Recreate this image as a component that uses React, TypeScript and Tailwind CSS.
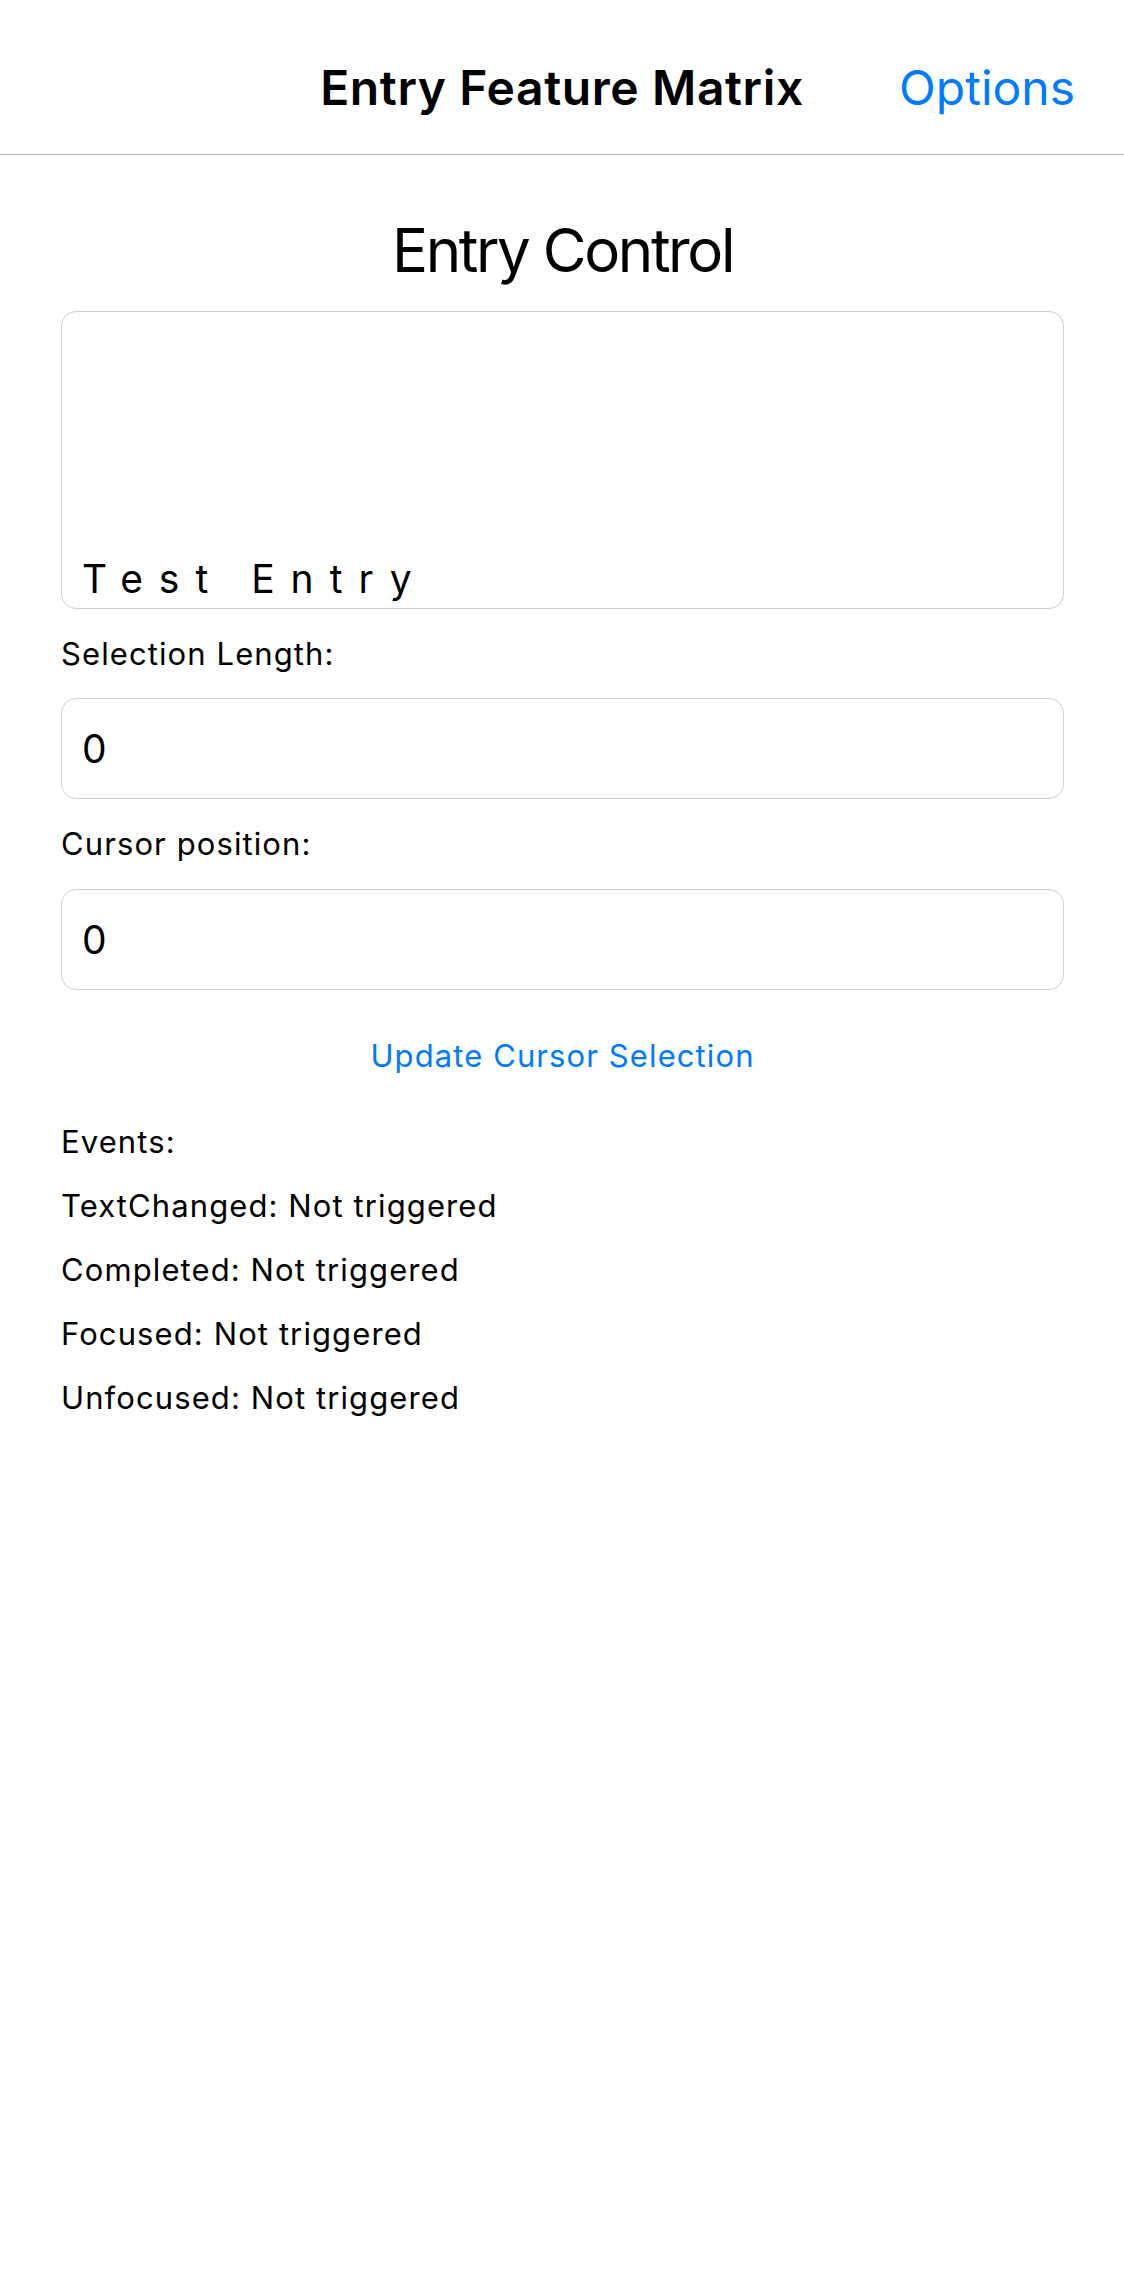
import React from 'react';

const EVENTS = ['TextChanged', 'Completed', 'Focused', 'Unfocused'];

const Field: React.FC<{ value: string; className?: string }> = ({ value, className }) => (
    <div className={`h-[101px] flex items-center pl-[20px] border border-[#cfcfcf] rounded-[15px] bg-white ${className ?? ''}`}>
        <span className="text-[39px] leading-[40px]">{value}</span>
    </div>
);

export default function App() {
    return (
        <div className="min-h-[2286px] bg-white text-black font-['Inter','Liberation_Sans',sans-serif]">
            {/* Navigation bar */}
            <div className="h-[155px] pt-[21px] grid grid-cols-[1fr_auto_1fr] items-center border-b border-[#b8b8b8]">
                <div />
                <h1 className="text-[48px] leading-[60px] font-semibold tracking-[0.6px]">Entry Feature Matrix</h1>
                <div className="flex justify-end pr-[49px]">
                    <button className="text-[48px] leading-[60px] text-[#007aff]">Options</button>
                </div>
            </div>

            <div className="ml-[61px] mr-[60px] flex flex-col">
                <h2 className="mt-[59px] text-[60px] leading-[72px] text-center tracking-[-2.4px]">Entry Control</h2>

                <div className="mt-[25px] h-[298px] flex items-end pl-[20px] pb-[9px] border border-[#cfcfcf] rounded-[15px]">
                    <span className="text-[39px] leading-[40px] tracking-[16px]">Test Entry</span>
                </div>

                <label className="mt-[25px] text-[31px] leading-[40px] tracking-[1.1px]">Selection Length:</label>
                <Field value="0" className="mt-[24px]" />

                <label className="mt-[25px] text-[31px] leading-[40px] tracking-[1.1px]">Cursor position:</label>
                <Field value="0" className="mt-[25px]" />

                <button className="mt-[46px] text-[31px] leading-[40px] tracking-[1.1px] text-[#007aff] text-center">Update Cursor Selection</button>

                <div className="mt-[34px] flex flex-col text-[31px] leading-[64px] tracking-[1.1px]">
                    <span>Events:</span>
                    {EVENTS.map((name) => (
                        <span key={name}>{name}: Not triggered</span>
                    ))}
                </div>
            </div>
        </div>
    );
}
